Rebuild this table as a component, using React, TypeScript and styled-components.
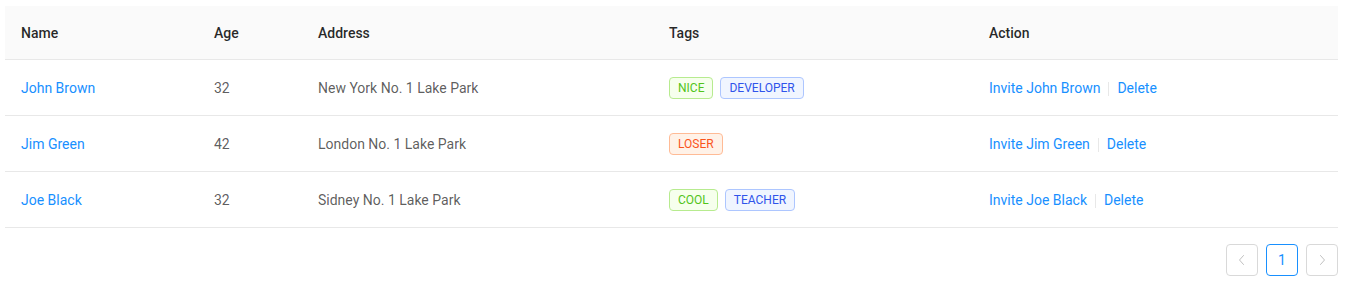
import React from "react";
import styled, { createGlobalStyle } from "styled-components";

const GlobalStyle = createGlobalStyle`
  body {
    margin: 0;
    background: #fff;
    font-family: Roboto, "Noto Sans", sans-serif;
    font-size: 14px;
    color: rgba(0, 0, 0, 0.65);
  }
`;

type TagColor = "green" | "geekblue" | "volcano";

type Row = {
  key: string;
  name: string;
  age: number;
  address: string;
  tags: string[];
};

const data: Row[] = [
  { key: "1", name: "John Brown", age: 32, address: "New York No. 1 Lake Park", tags: ["nice", "developer"] },
  { key: "2", name: "Jim Green", age: 42, address: "London No. 1 Lake Park", tags: ["loser"] },
  { key: "3", name: "Joe Black", age: 32, address: "Sidney No. 1 Lake Park", tags: ["cool", "teacher"] },
];

const tagColor = (tag: string): TagColor => {
  if (tag === "loser") return "volcano";
  return tag.length > 5 ? "geekblue" : "green";
};

const tagPalette = {
  green: { bg: "#f6ffed", border: "#b7eb8f", color: "#52c41a" },
  geekblue: { bg: "#f0f5ff", border: "#adc6ff", color: "#2f54eb" },
  volcano: { bg: "#fff2e8", border: "#ffbb96", color: "#fa541c" },
};

function App() {
  return (
    <>
      <GlobalStyle />
      <Page>
        <Table>
          <colgroup>
            <col style={{ width: 193 }} />
            <col style={{ width: 104 }} />
            <col style={{ width: 351 }} />
            <col style={{ width: 320 }} />
            <col />
          </colgroup>
          <thead>
            <tr>
              <Th>Name</Th>
              <Th>Age</Th>
              <Th>Address</Th>
              <Th>Tags</Th>
              <Th>Action</Th>
            </tr>
          </thead>
          <tbody>
            {data.map((row) => (
              <tr key={row.key}>
                <Td>
                  <Link>{row.name}</Link>
                </Td>
                <Td>{row.age}</Td>
                <Td>{row.address}</Td>
                <Td>
                  {row.tags.map((tag) => (
                    <Tag key={tag} $color={tagColor(tag)}>
                      {tag.toUpperCase()}
                    </Tag>
                  ))}
                </Td>
                <Td>
                  <Link>Invite {row.name}</Link>
                  <Divider />
                  <Link>Delete</Link>
                </Td>
              </tr>
            ))}
          </tbody>
        </Table>
        <Pagination>
          <PageItem $disabled>
            <Chevron dir="left" />
          </PageItem>
          <PageItem $active>1</PageItem>
          <PageItem $disabled>
            <Chevron dir="right" />
          </PageItem>
        </Pagination>
      </Page>
    </>
  );
}

function Chevron({ dir }: { dir: "left" | "right" }) {
  return (
    <svg width="12" height="12" viewBox="0 0 12 12" fill="none">
      <path
        d={dir === "left" ? "M7.5 1.5 3.5 6l4 4.5" : "M4.5 1.5 8.5 6l-4 4.5"}
        stroke="currentColor"
        strokeWidth="1"
        strokeLinecap="round"
        strokeLinejoin="round"
      />
    </svg>
  );
}

const Page = styled.div`
  padding: 6px 10px 0 5px;
`;

const Table = styled.table`
  width: 100%;
  border-collapse: collapse;
  table-layout: fixed;
  text-align: left;
`;

const Th = styled.th`
  height: 52px;
  padding: 1px 16px 0;
  background: #fafafa;
  border-bottom: 1px solid #e8e8e8;
  color: rgba(0, 0, 0, 0.85);
  font-weight: 500;
  line-height: 21px;
`;

const Td = styled.td`
  height: 54px;
  padding: 1px 16px 0;
  border-bottom: 1px solid #e8e8e8;
  line-height: 21px;
  white-space: nowrap;
`;

const Link = styled.a`
  color: #1890ff;
  cursor: pointer;
`;

const Divider = styled.span`
  display: inline-block;
  width: 1px;
  height: 14px;
  margin: 0 8px;
  vertical-align: middle;
  background: #e8e8e8;
`;

const Tag = styled.span<{ $color: TagColor }>`
  display: inline-block;
  height: 20px;
  padding: 0 8px;
  margin-right: 7px;
  font-size: 12px;
  line-height: 20px;
  border-radius: 4px;
  vertical-align: middle;
  background: ${(p) => tagPalette[p.$color].bg};
  border: 1px solid ${(p) => tagPalette[p.$color].border};
  color: ${(p) => tagPalette[p.$color].color};
`;

const Pagination = styled.div`
  display: flex;
  justify-content: flex-end;
  gap: 8px;
  margin-top: 16px;
`;

const PageItem = styled.div<{ $active?: boolean; $disabled?: boolean }>`
  box-sizing: border-box;
  width: 32px;
  height: 32px;
  display: flex;
  align-items: center;
  justify-content: center;
  border: 1px solid ${(p) => (p.$active ? "#1890ff" : "#d9d9d9")};
  border-radius: 4px;
  color: ${(p) => (p.$active ? "#1890ff" : p.$disabled ? "rgba(0,0,0,0.25)" : "rgba(0,0,0,0.65)")};
  font-size: 14px;
`;

export default App;
